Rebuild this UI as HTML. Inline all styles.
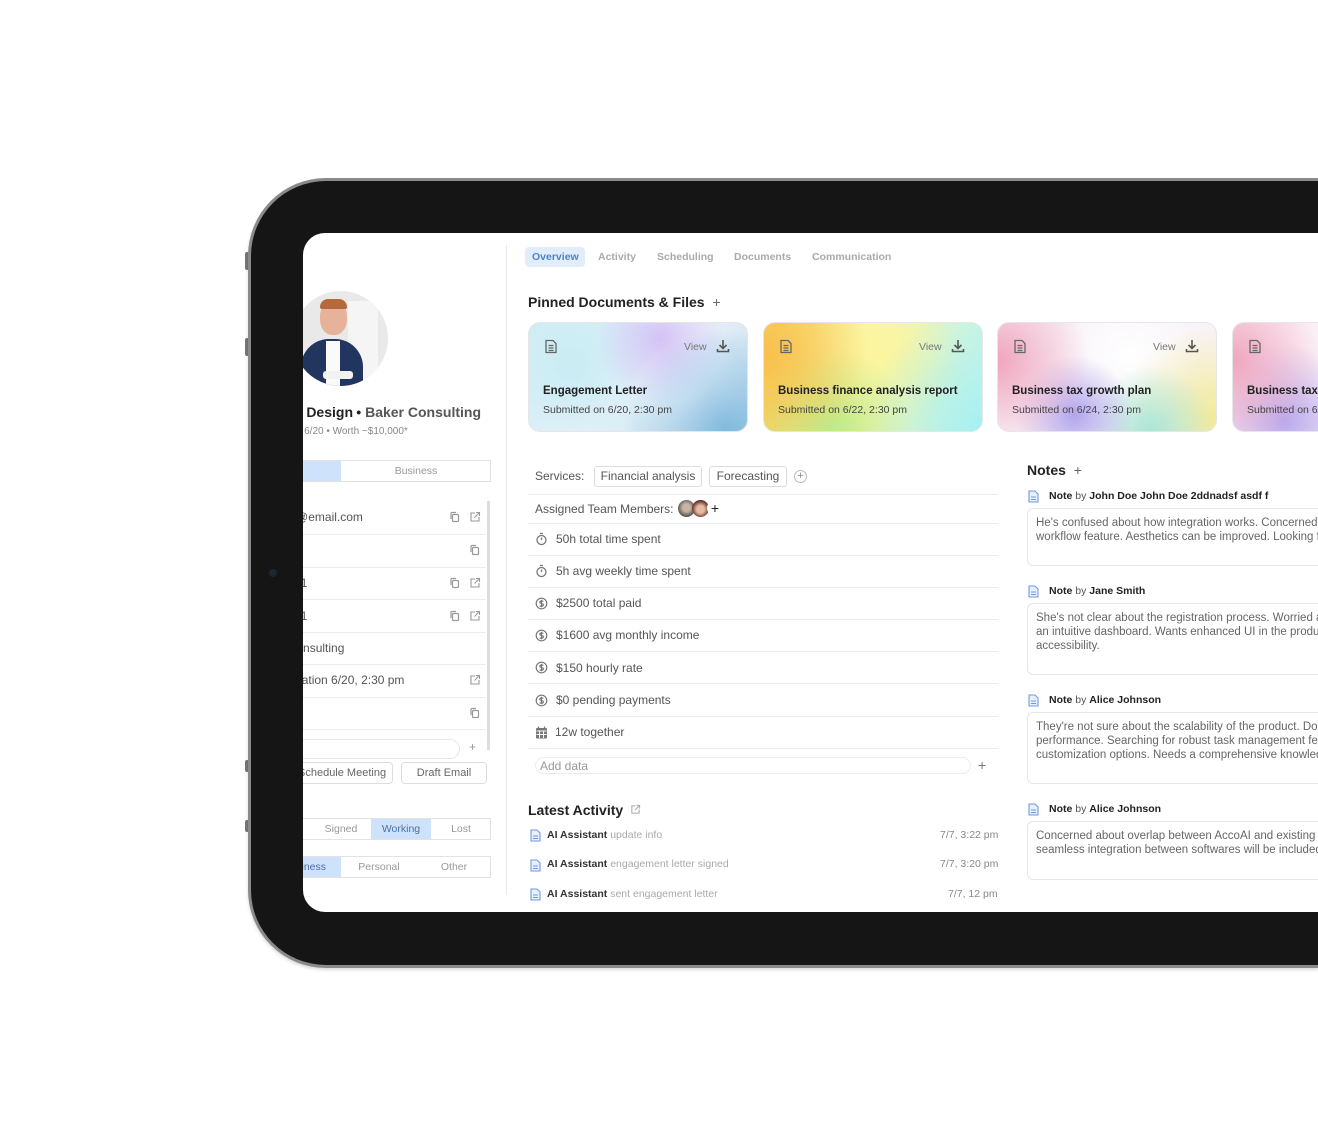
<!DOCTYPE html>
<html><head><meta charset="utf-8"><style>
*{box-sizing:border-box;margin:0;padding:0}
html,body{width:1318px;height:1147px;overflow:hidden;background:#fff;font-family:"Liberation Sans",Arial,sans-serif;color:#555}
.a{position:absolute}
#rim{left:248px;top:178px;width:1070px;height:790px;border-radius:78px 0 0 78px;background:#151515;border:3px solid #8a8a8a;border-right:0;box-shadow:0 2px 3px rgba(0,0,0,.15)}
#screen{left:303px;top:233px;width:1015px;height:679px;border-radius:22px 0 0 22px;background:#fff;overflow:hidden}
#pg{left:-303px;top:-233px;width:1318px;height:1147px}
.hl{height:1px;background:#ececec}
.t{font-size:12px;color:#555;white-space:nowrap}
.seg{border:1px solid #e2e2e2;height:22px;background:#fff}
.cell{position:absolute;top:0;height:20px;line-height:20px;text-align:center;font-size:10.5px;color:#999}
.btn{border:1px solid #ddd;border-radius:4px;height:22px;line-height:20px;text-align:center;font-size:11px;color:#666;background:#fff;white-space:nowrap;overflow:hidden}
.card{width:220px;height:110px;border-radius:12px;border:1px solid #e6e6e6;overflow:hidden}
.card .ti{position:absolute;left:15px;top:63px;font-size:11.5px;font-weight:bold;color:#222;white-space:nowrap}
.card .su{position:absolute;left:15px;top:82px;font-size:10.5px;color:#444;white-space:nowrap}
.card .vw{position:absolute;left:156px;top:19px;font-size:10.5px;color:#777}
.card svg{position:absolute}
.nb{border:1px solid #e6e6e6;border-radius:6px;width:320px;padding:7px 8px;font-size:11.5px;line-height:14px;color:#666;white-space:nowrap;overflow:hidden}
.nh{font-size:10.5px;color:#555;white-space:nowrap}
.nh b{color:#222}
</style></head><body>
<div class="a" style="left:245px;top:252px;width:4px;height:18px;background:#777;border-radius:2px"></div>
<div class="a" style="left:245px;top:338px;width:4px;height:18px;background:#777;border-radius:2px"></div>
<div class="a" style="left:245px;top:760px;width:4px;height:12px;background:#777;border-radius:2px"></div>
<div class="a" style="left:245px;top:820px;width:4px;height:12px;background:#777;border-radius:2px"></div>
<div class="a" id="rim"></div>
<div class="a" style="left:269px;top:569px;width:8px;height:8px;border-radius:50%;background:#1d2633"></div>
<div class="a" id="screen"><div class="a" id="pg">

<div class="a" style="left:506px;top:245px;width:1px;height:650px;background:#e8e8e8"></div>
<div class="a" style="left:293px;top:291px;width:95px;height:95px;border-radius:50%;overflow:hidden;background:#e9e9e9">
 <div class="a" style="left:55px;top:10px;width:30px;height:80px;background:#f5f5f5"></div>
 <div class="a" style="left:8px;top:48px;width:62px;height:60px;border-radius:28px 28px 0 0;background:#22355e"></div>
 <div class="a" style="left:33px;top:50px;width:14px;height:45px;background:#fafafa"></div>
 <div class="a" style="left:27px;top:10px;width:27px;height:34px;border-radius:45%;background:#e6b39a"></div>
 <div class="a" style="left:27px;top:8px;width:27px;height:10px;border-radius:12px 12px 3px 3px;background:#b66a3c"></div>
 <div class="a" style="left:30px;top:80px;width:30px;height:8px;background:#f2f2f2;border-radius:3px"></div>
</div>
<div class="a" style="left:153px;top:404px;width:200px;text-align:right;font-size:14px;font-weight:bold;color:#222;white-space:nowrap">Baker Design</div>
<div class="a" style="left:281px;top:404px;width:200px;text-align:right;font-size:14px;font-weight:bold;color:#555;white-space:nowrap"><span style="color:#222">•</span> Baker Consulting</div>
<div class="a t" style="left:283px;top:426px;font-size:10px;color:#888">Due 6/20 • Worth ~$10,000*</div>
<div class="a seg" style="left:200px;top:460px;width:291px">
 <div class="cell" style="left:0;width:140px;background:#cfe2fb"></div>
 <div class="cell" style="left:140px;width:150px">Business</div>
</div>
<div class="a" style="left:487px;top:501px;width:3px;height:249px;background:#ddd"></div>
<div class="a t" style="left:250px;top:510px;font-size:12px">john.doe@email.com</div>
<div class="a hl" style="left:200px;top:534px;width:286px"></div>
<div class="a hl" style="left:200px;top:567px;width:286px"></div>
<div class="a t" style="left:258px;top:576px">Meeting1</div>
<div class="a hl" style="left:200px;top:599px;width:286px"></div>
<div class="a t" style="left:258px;top:609px">Meeting1</div>
<div class="a hl" style="left:200px;top:632px;width:286px"></div>
<div class="a t" style="left:253px;top:641px">Baker Consulting</div>
<div class="a hl" style="left:200px;top:664px;width:286px"></div>
<div class="a t" style="left:261px;top:673px">Consultation 6/20, 2:30 pm</div>
<div class="a hl" style="left:200px;top:697px;width:286px"></div>
<div class="a hl" style="left:200px;top:729px;width:286px"></div>
<div class="a" style="left:200px;top:739px;width:260px;height:20px;border:1px solid #e6e6e6;border-radius:10px"></div>
<div class="a t" style="left:469px;top:740px;color:#999">+</div>
<svg class="a" style="left:449px;top:511px" width="12" height="12" viewBox="0 0 12 12" fill="none" stroke="#999" stroke-width="1.2"><rect x="3.5" y="3.5" width="6" height="7" rx="1"/><path d="M2 8V2.5A1 1 0 0 1 3 1.5h4"/></svg>
<svg class="a" style="left:469px;top:511px" width="12" height="12" viewBox="0 0 12 12" fill="none" stroke="#999" stroke-width="1.1"><path d="M6 2H2v8h8V6M7 1.5h3.5V5M10.5 1.5 5.5 6.5"/></svg>
<svg class="a" style="left:469px;top:544px" width="12" height="12" viewBox="0 0 12 12" fill="none" stroke="#999" stroke-width="1.2"><rect x="3.5" y="3.5" width="6" height="7" rx="1"/><path d="M2 8V2.5A1 1 0 0 1 3 1.5h4"/></svg>
<svg class="a" style="left:449px;top:577px" width="12" height="12" viewBox="0 0 12 12" fill="none" stroke="#999" stroke-width="1.2"><rect x="3.5" y="3.5" width="6" height="7" rx="1"/><path d="M2 8V2.5A1 1 0 0 1 3 1.5h4"/></svg>
<svg class="a" style="left:469px;top:577px" width="12" height="12" viewBox="0 0 12 12" fill="none" stroke="#999" stroke-width="1.1"><path d="M6 2H2v8h8V6M7 1.5h3.5V5M10.5 1.5 5.5 6.5"/></svg>
<svg class="a" style="left:449px;top:610px" width="12" height="12" viewBox="0 0 12 12" fill="none" stroke="#999" stroke-width="1.2"><rect x="3.5" y="3.5" width="6" height="7" rx="1"/><path d="M2 8V2.5A1 1 0 0 1 3 1.5h4"/></svg>
<svg class="a" style="left:469px;top:610px" width="12" height="12" viewBox="0 0 12 12" fill="none" stroke="#999" stroke-width="1.1"><path d="M6 2H2v8h8V6M7 1.5h3.5V5M10.5 1.5 5.5 6.5"/></svg>
<svg class="a" style="left:469px;top:674px" width="12" height="12" viewBox="0 0 12 12" fill="none" stroke="#999" stroke-width="1.1"><path d="M6 2H2v8h8V6M7 1.5h3.5V5M10.5 1.5 5.5 6.5"/></svg>
<svg class="a" style="left:469px;top:707px" width="12" height="12" viewBox="0 0 12 12" fill="none" stroke="#999" stroke-width="1.2"><rect x="3.5" y="3.5" width="6" height="7" rx="1"/><path d="M2 8V2.5A1 1 0 0 1 3 1.5h4"/></svg>
<div class="a btn" style="left:200px;top:762px;width:193px;text-align:left;padding-left:97px">Schedule Meeting</div>
<div class="a btn" style="left:401px;top:762px;width:86px">Draft Email</div>
<div class="a seg" style="left:200px;top:818px;width:291px">
 <div class="cell" style="left:110px;width:60px">Signed</div>
 <div class="cell" style="left:170px;width:60px;background:#cfe2fb;color:#4a6fa8">Working</div>
 <div class="cell" style="left:230px;width:60px">Lost</div>
</div>
<div class="a seg" style="left:200px;top:856px;width:291px">
 <div class="cell" style="left:0;width:140px;background:#cfe2fb;color:#4a6fa8;text-align:right;padding-right:15px">Business</div>
 <div class="cell" style="left:140px;width:76px">Personal</div>
 <div class="cell" style="left:216px;width:74px">Other</div>
</div>

<div class="a" style="left:525px;top:247px;width:60px;height:20px;border-radius:4px;background:#e1edfb"></div>
<div class="a t" style="left:532px;top:251px;font-size:10.5px;color:#4f84c4;font-weight:bold">Overview</div>
<div class="a t" style="left:598px;top:251px;font-size:10.5px;color:#aaa;font-weight:bold">Activity</div>
<div class="a t" style="left:657px;top:251px;font-size:10.5px;color:#aaa;font-weight:bold">Scheduling</div>
<div class="a t" style="left:734px;top:251px;font-size:10.5px;color:#aaa;font-weight:bold">Documents</div>
<div class="a t" style="left:812px;top:251px;font-size:10.5px;color:#aaa;font-weight:bold">Communication</div>

<div class="a" style="left:528px;top:294px;font-size:14px;font-weight:bold;color:#222;white-space:nowrap">Pinned Documents &amp; Files <span style="font-weight:normal;color:#666;margin-left:4px">+</span></div>

<div class="a card" style="left:528px;top:322px;background:radial-gradient(circle at 90% 100%,rgba(120,180,220,.9),transparent 45%),radial-gradient(circle at 60% 15%,rgba(210,190,245,.9),transparent 40%),radial-gradient(circle at 75% 70%,#fff 0,transparent 35%),radial-gradient(circle at 20% 40%,#c9ecf3,transparent 60%),linear-gradient(135deg,#d6eef6,#eef2fb 50%,#b9dbe9)"></div>
<div class="a card" style="left:763px;top:322px;background:radial-gradient(circle at 0% 30%,#f8c04c,transparent 45%),radial-gradient(circle at 100% 100%,#a7f0f2,transparent 50%),radial-gradient(circle at 30% 100%,#b9ec8a,transparent 45%),radial-gradient(circle at 55% 30%,#fbf59e,transparent 55%),linear-gradient(90deg,#f9d86a,#fbf5a8 50%,#c8f4e6)"></div>
<div class="a card" style="left:997px;top:322px;background:radial-gradient(circle at 0% 35%,#f0a5be,transparent 40%),radial-gradient(circle at 35% 85%,#b2a5ef,transparent 35%),radial-gradient(circle at 70% 100%,#a8e6d6,transparent 35%),radial-gradient(circle at 100% 90%,#f3ea93,transparent 40%),radial-gradient(circle at 60% 30%,#fff,transparent 50%),#f8f3f8"></div>
<div class="a card" style="left:1232px;top:322px;width:86px;border-radius:12px 0 0 12px;border-right:0;background:radial-gradient(circle at 0% 35%,#f0a5be,transparent 80%),radial-gradient(circle at 60% 90%,#b7a8ee,transparent 70%),#fbf0f6"></div>

<div class="a" style="left:528px;top:322px;width:790px;height:110px;overflow:hidden">
 <div class="a" style="left:0;top:0;width:220px;height:110px"><div class="card" style="border:0;background:none;position:relative">
  <svg style="left:16px;top:17px" width="14" height="15" viewBox="0 0 14 15" fill="none" stroke="#666" stroke-width="1.3"><path d="M2 1.5h7l3 3v9H2z M4.5 6.5h5M4.5 9h5M4.5 11.5h5"/></svg>
  <div class="vw">View</div>
  <svg style="left:188px;top:17px" width="14" height="14" viewBox="0 0 14 14" fill="none" stroke="#555" stroke-width="1.6"><path d="M7 1v8M3.5 6 7 9.5 10.5 6M1.5 10v2.5h11V10"/></svg>
  <div class="ti">Engagement Letter</div><div class="su">Submitted on 6/20, 2:30 pm</div></div></div>
 <div class="a" style="left:235px;top:0;width:220px;height:110px"><div class="card" style="border:0;background:none;position:relative">
  <svg style="left:16px;top:17px" width="14" height="15" viewBox="0 0 14 15" fill="none" stroke="#666" stroke-width="1.3"><path d="M2 1.5h7l3 3v9H2z M4.5 6.5h5M4.5 9h5M4.5 11.5h5"/></svg>
  <div class="vw">View</div>
  <svg style="left:188px;top:17px" width="14" height="14" viewBox="0 0 14 14" fill="none" stroke="#555" stroke-width="1.6"><path d="M7 1v8M3.5 6 7 9.5 10.5 6M1.5 10v2.5h11V10"/></svg>
  <div class="ti">Business finance analysis report</div><div class="su">Submitted on 6/22, 2:30 pm</div></div></div>
 <div class="a" style="left:469px;top:0;width:220px;height:110px"><div class="card" style="border:0;background:none;position:relative">
  <svg style="left:16px;top:17px" width="14" height="15" viewBox="0 0 14 15" fill="none" stroke="#666" stroke-width="1.3"><path d="M2 1.5h7l3 3v9H2z M4.5 6.5h5M4.5 9h5M4.5 11.5h5"/></svg>
  <div class="vw">View</div>
  <svg style="left:188px;top:17px" width="14" height="14" viewBox="0 0 14 14" fill="none" stroke="#555" stroke-width="1.6"><path d="M7 1v8M3.5 6 7 9.5 10.5 6M1.5 10v2.5h11V10"/></svg>
  <div class="ti">Business tax growth plan</div><div class="su">Submitted on 6/24, 2:30 pm</div></div></div>
 <div class="a" style="left:704px;top:0;width:86px;height:110px;overflow:hidden"><div class="card" style="border:0;background:none;position:relative">
  <svg style="left:16px;top:17px" width="14" height="15" viewBox="0 0 14 15" fill="none" stroke="#666" stroke-width="1.3"><path d="M2 1.5h7l3 3v9H2z M4.5 6.5h5M4.5 9h5M4.5 11.5h5"/></svg>
  <div class="ti">Business tax growth plan</div><div class="su">Submitted on 6/26, 2:30 pm</div></div></div>
</div>

<div class="a t" style="left:535px;top:469px">Services:</div>
<div class="a" style="left:594px;top:466px;width:108px;height:21px;border:1px solid #ddd;border-radius:3px;font-size:12px;line-height:19px;text-align:center;color:#555">Financial analysis</div>
<div class="a" style="left:709px;top:466px;width:78px;height:21px;border:1px solid #ddd;border-radius:3px;font-size:12px;line-height:19px;text-align:center;color:#555">Forecasting</div>
<div class="a" style="left:794px;top:470px;width:13px;height:13px;border:1px solid #bbb;border-radius:50%;font-size:11px;line-height:11px;text-align:center;color:#888">+</div>
<div class="a hl" style="left:528px;top:494px;width:470px"></div>
<div class="a t" style="left:535px;top:502px">Assigned Team Members:</div>
<div class="a" style="left:678px;top:500px;width:17px;height:17px;border-radius:50%;background:radial-gradient(circle at 50% 45%,#c9b3a3 30%,#555 70%)"></div>
<div class="a" style="left:692px;top:500px;width:17px;height:17px;border-radius:50%;background:radial-gradient(circle at 50% 55%,#e7b8a3 30%,#5a2e20 70%)"></div>
<div class="a" style="left:707px;top:500px;width:16px;height:16px;border-radius:50%;background:#fff;font-size:14px;line-height:16px;text-align:center;color:#222">+</div>
<div class="a hl" style="left:528px;top:523px;width:470px"></div>
<div class="a hl" style="left:528px;top:555px;width:470px"></div>
<div class="a hl" style="left:528px;top:587px;width:470px"></div>
<div class="a hl" style="left:528px;top:619px;width:470px"></div>
<div class="a hl" style="left:528px;top:651px;width:470px"></div>
<div class="a hl" style="left:528px;top:683px;width:470px"></div>
<div class="a hl" style="left:528px;top:716px;width:470px"></div>
<div class="a hl" style="left:528px;top:748px;width:470px"></div>

<svg class="a" style="left:535px;top:532px" width="13" height="14" viewBox="0 0 13 14" fill="none" stroke="#777" stroke-width="1.3"><circle cx="6.5" cy="8" r="4.5"/><path d="M6.5 8V5.5M5 1.5h3"/></svg>
<div class="a t" style="left:556px;top:532px">50h total time spent</div>
<svg class="a" style="left:535px;top:564px" width="13" height="14" viewBox="0 0 13 14" fill="none" stroke="#777" stroke-width="1.3"><circle cx="6.5" cy="8" r="4.5"/><path d="M6.5 8V5.5M5 1.5h3"/></svg>
<div class="a t" style="left:556px;top:564px">5h avg weekly time spent</div>
<svg class="a" style="left:535px;top:597px" width="13" height="13" viewBox="0 0 13 13" fill="none" stroke="#777" stroke-width="1.2"><circle cx="6.5" cy="6.5" r="5.3"/><path d="M8.3 4.5C7.5 3.7 4.8 3.7 4.8 5.3s3.6 1 3.6 2.6-2.8 1.7-3.8.8M6.5 2.7v7.6"/></svg>
<div class="a t" style="left:556px;top:596px">$2500 total paid</div>
<svg class="a" style="left:535px;top:629px" width="13" height="13" viewBox="0 0 13 13" fill="none" stroke="#777" stroke-width="1.2"><circle cx="6.5" cy="6.5" r="5.3"/><path d="M8.3 4.5C7.5 3.7 4.8 3.7 4.8 5.3s3.6 1 3.6 2.6-2.8 1.7-3.8.8M6.5 2.7v7.6"/></svg>
<div class="a t" style="left:556px;top:628px">$1600 avg monthly income</div>
<svg class="a" style="left:535px;top:661px" width="13" height="13" viewBox="0 0 13 13" fill="none" stroke="#777" stroke-width="1.2"><circle cx="6.5" cy="6.5" r="5.3"/><path d="M8.3 4.5C7.5 3.7 4.8 3.7 4.8 5.3s3.6 1 3.6 2.6-2.8 1.7-3.8.8M6.5 2.7v7.6"/></svg>
<div class="a t" style="left:556px;top:661px">$150 hourly rate</div>
<svg class="a" style="left:535px;top:694px" width="13" height="13" viewBox="0 0 13 13" fill="none" stroke="#777" stroke-width="1.2"><circle cx="6.5" cy="6.5" r="5.3"/><path d="M8.3 4.5C7.5 3.7 4.8 3.7 4.8 5.3s3.6 1 3.6 2.6-2.8 1.7-3.8.8M6.5 2.7v7.6"/></svg>
<div class="a t" style="left:556px;top:693px">$0 pending payments</div>
<svg class="a" style="left:535px;top:726px" width="13" height="13" viewBox="0 0 13 13"><rect x="1" y="2" width="11" height="10.5" rx="1" fill="#777"/><path d="M1.5 5h10M4.5 5v7M8.5 5v7M1.5 8.5h10" stroke="#fff" stroke-width=".9"/><path d="M3.5 .5v3M9.5 .5v3" stroke="#777" stroke-width="1.3"/></svg>
<div class="a t" style="left:555px;top:725px">12w together</div>
<div class="a" style="left:535px;top:757px;width:436px;height:17px;border:1px solid #ececec;border-radius:9px"></div>
<div class="a t" style="left:540px;top:759px;color:#999">Add data</div>
<div class="a t" style="left:978px;top:757px;font-size:14px;color:#777">+</div>

<div class="a" style="left:528px;top:802px;font-size:14px;font-weight:bold;color:#222">Latest Activity</div>
<svg class="a" style="left:630px;top:804px" width="11" height="11" viewBox="0 0 12 12" fill="none" stroke="#aaa" stroke-width="1.1"><path d="M6 2H2v8h8V6M7 1.5h3.5V5M10.5 1.5 5.5 6.5"/></svg>

<svg class="a" style="left:530px;top:829px" width="11" height="13" viewBox="0 0 11 13" fill="#e8f0fd" stroke="#6b9be3" stroke-width="1.1"><path d="M1 1h6l3 3v8H1z M3 7h5M3 9.5h5"/></svg>
<div class="a t" style="left:547px;top:829px;font-size:10.5px;color:#aaa"><b style="color:#333">AI Assistant</b> update info</div>
<div class="a t" style="left:940px;top:829px;font-size:10.5px;color:#888">7/7, 3:22 pm</div>
<svg class="a" style="left:530px;top:859px" width="11" height="13" viewBox="0 0 11 13" fill="#e8f0fd" stroke="#6b9be3" stroke-width="1.1"><path d="M1 1h6l3 3v8H1z M3 7h5M3 9.5h5"/></svg>
<div class="a t" style="left:547px;top:858px;font-size:10.5px;color:#aaa"><b style="color:#333">AI Assistant</b> engagement letter signed</div>
<div class="a t" style="left:940px;top:858px;font-size:10.5px;color:#888">7/7, 3:20 pm</div>
<svg class="a" style="left:530px;top:888px" width="11" height="13" viewBox="0 0 11 13" fill="#e8f0fd" stroke="#6b9be3" stroke-width="1.1"><path d="M1 1h6l3 3v8H1z M3 7h5M3 9.5h5"/></svg>
<div class="a t" style="left:547px;top:888px;font-size:10.5px;color:#aaa"><b style="color:#333">AI Assistant</b> sent engagement letter</div>
<div class="a t" style="left:948px;top:888px;font-size:10.5px;color:#888">7/7, 12 pm</div>

<div class="a" style="left:1027px;top:462px;font-size:14px;font-weight:bold;color:#222;white-space:nowrap">Notes <span style="font-weight:normal;color:#666;margin-left:4px">+</span></div>
<svg class="a" style="left:1028px;top:490px" width="11" height="13" viewBox="0 0 11 13" fill="#e8f0fd" stroke="#6b9be3" stroke-width="1.1"><path d="M1 1h6l3 3v8H1z M3 7h5M3 9.5h5"/></svg>
<div class="a nh" style="left:1049px;top:490px"><b>Note</b> by <b>John Doe John Doe 2ddnadsf asdf f</b></div>
<div class="a nb" style="left:1027px;top:508px;height:58px;width:291px;border-right:0;border-radius:6px 0 0 6px">He's confused about how integration works. Concerned about the<br>workflow feature. Aesthetics can be improved. Looking for more</div>
<svg class="a" style="left:1028px;top:585px" width="11" height="13" viewBox="0 0 11 13" fill="#e8f0fd" stroke="#6b9be3" stroke-width="1.1"><path d="M1 1h6l3 3v8H1z M3 7h5M3 9.5h5"/></svg>
<div class="a nh" style="left:1049px;top:585px"><b>Note</b> by <b>Jane Smith</b></div>
<div class="a nb" style="left:1027px;top:603px;height:72px;width:291px;border-right:0;border-radius:6px 0 0 6px">She's not clear about the registration process. Worried about<br>an intuitive dashboard. Wants enhanced UI in the product for<br>accessibility.</div>
<svg class="a" style="left:1028px;top:694px" width="11" height="13" viewBox="0 0 11 13" fill="#e8f0fd" stroke="#6b9be3" stroke-width="1.1"><path d="M1 1h6l3 3v8H1z M3 7h5M3 9.5h5"/></svg>
<div class="a nh" style="left:1049px;top:694px"><b>Note</b> by <b>Alice Johnson</b></div>
<div class="a nb" style="left:1027px;top:712px;height:72px;width:291px;border-right:0;border-radius:6px 0 0 6px">They're not sure about the scalability of the product. Doubts<br>performance. Searching for robust task management features<br>customization options. Needs a comprehensive knowledge base</div>
<svg class="a" style="left:1028px;top:803px" width="11" height="13" viewBox="0 0 11 13" fill="#e8f0fd" stroke="#6b9be3" stroke-width="1.1"><path d="M1 1h6l3 3v8H1z M3 7h5M3 9.5h5"/></svg>
<div class="a nh" style="left:1049px;top:803px"><b>Note</b> by <b>Alice Johnson</b></div>
<div class="a nb" style="left:1027px;top:821px;height:59px;width:291px;border-right:0;border-radius:6px 0 0 6px">Concerned about overlap between AccoAI and existing tools. Hopes<br>seamless integration between softwares will be included</div>

</div></div>
</body></html>
